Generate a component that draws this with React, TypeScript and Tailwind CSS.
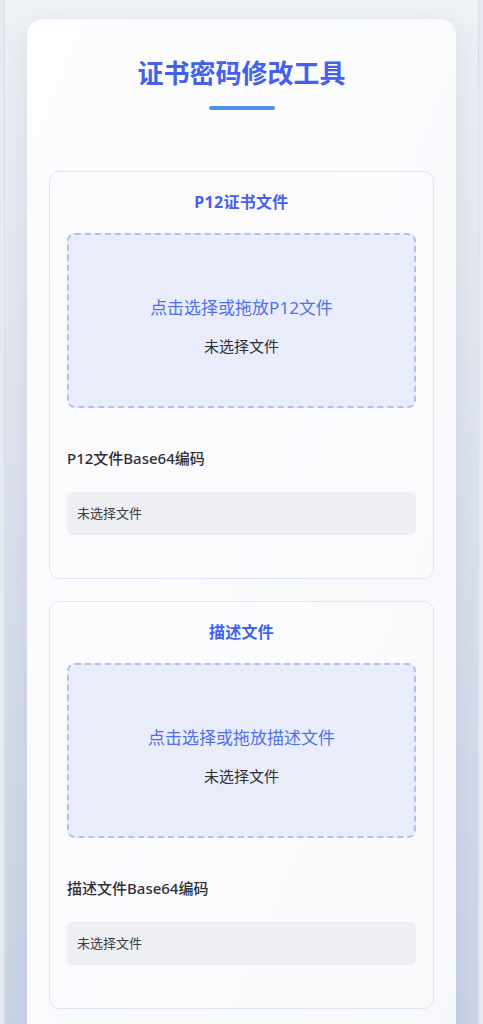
import React from "react";

const font = { fontFamily: '"Noto Sans", "Noto Sans CJK SC", sans-serif' };

function Section({ title, drop, label }: { title: string; drop: string; label: string }) {
  return (
    <div className="rounded-[10px] border border-[#e1e5f7] bg-[#fbfbfe]/70 px-[17px] pt-[20px] pb-[43px]">
      <h2 className="text-center text-[16px] leading-[20px] font-bold tracking-[0.3px] text-[#4361ee]">{title}</h2>
      <div className="mt-[21px] h-[175px] rounded-[8px] border-2 border-dashed border-[#b3c0f2] bg-[#e9ecfb] pt-[61px] text-center">
        <div className="text-[17px] leading-[24px] text-[#5370ec]">{drop}</div>
        <div className="mt-[15px] text-[15px] leading-[22px] text-[#2d2d33]">未选择文件</div>
      </div>
      <div className="mt-[39px] text-[15px] leading-[22px] font-medium text-[#2f2f36]">{label}</div>
      <div className="mt-[23px] h-[43px] rounded-[6px] bg-[#eeeff2] px-[10px] flex items-center text-[13px] text-[#3d3d45]">
        未选择文件
      </div>
    </div>
  );
}

export default function App() {
  return (
    <div className="min-h-[1024px] bg-[#e7ebf1] px-[4px]" style={font}>
      <div className="min-h-[1100px] border-l border-r border-[#d9dee7] bg-gradient-to-b from-[#eef1f5] to-[#c8d1e4] px-[22px] pt-[19px]">
        <div className="rounded-[16px] bg-gradient-to-br from-[#fdfdff] to-[#f7f8fb] px-[22px] pt-[40px] pb-[40px] shadow-[0_10px_30px_rgba(100,115,160,0.15)]">
          <h1 className="text-center text-[26px] leading-[28px] font-bold text-[#4361ee]">证书密码修改工具</h1>
          <div className="mx-auto mt-[19px] h-[4px] w-[66px] rounded-full bg-[#4a90e8]" />
          <div className="mt-[61px] flex flex-col gap-[22px]">
            <Section title="P12证书文件" drop="点击选择或拖放P12文件" label="P12文件Base64编码" />
            <Section title="描述文件" drop="点击选择或拖放描述文件" label="描述文件Base64编码" />
          </div>
        </div>
      </div>
    </div>
  );
}
